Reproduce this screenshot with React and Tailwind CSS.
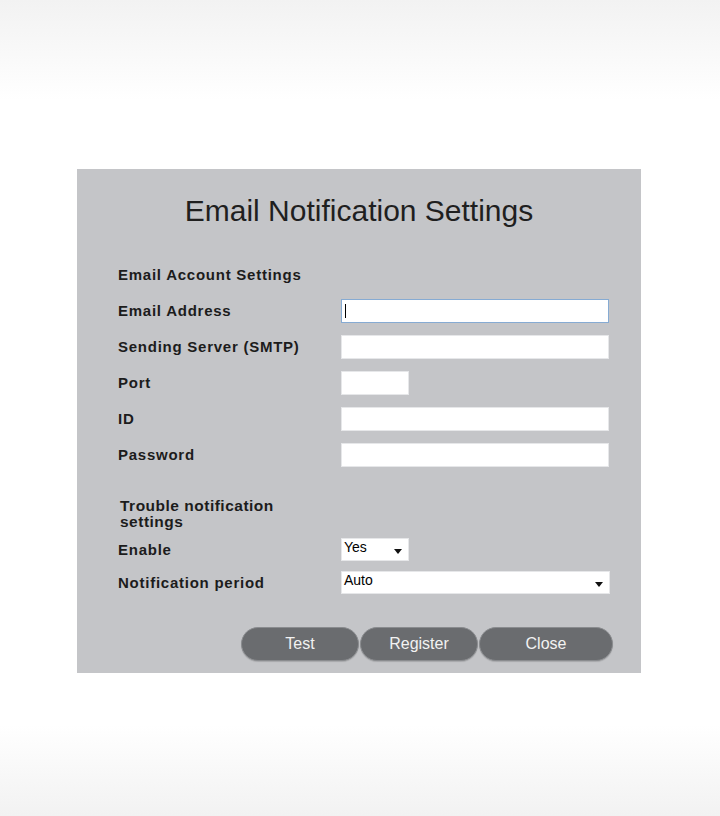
import React from "react";

const font = { fontFamily: '"Liberation Sans", Arial, sans-serif' };

function Label({ children }) {
  return (
    <div className="w-[223px] shrink-0 text-[15px] font-bold leading-6 tracking-[0.75px] text-[#1c1c1c]">
      {children}
    </div>
  );
}

function Input({ w = "w-[268px]", focused = false }) {
  return (
    <div
      className={`${w} h-6 bg-white border ${
        focused ? "border-[#86abd3]" : "border-[#e6e7e9]"
      } relative`}
    >
      {focused && <div className="absolute left-[3px] top-[4px] w-px h-[14px] bg-black" />}
    </div>
  );
}

function Arrow() {
  return (
    <svg width="8" height="5" viewBox="0 0 8 5" className="shrink-0">
      <path d="M0 0 L8 0 L4 5 Z" fill="#111" />
    </svg>
  );
}

function Select({ w, value }) {
  return (
    <div className={`${w} h-[23px] bg-white border border-[#e6e7e9] flex items-start justify-between pl-[2px] pr-[6px]`}>
      <span className="text-[14px] leading-[17px] text-black">{value}</span>
      <span className="pt-[10px]">
        <Arrow />
      </span>
    </div>
  );
}

function Button({ w, children }) {
  return (
    <button className={`${w} h-[34px] rounded-full bg-[#6a6c6f] border border-[#8a8c8f] shadow-[0_1px_1px_rgba(0,0,0,0.15)] text-[16px] text-[#f2f2f2] leading-none`}>
      {children}
    </button>
  );
}

export default function App() {
  return (
    <div
      style={font}
      className="w-[720px] h-[816px] pt-[169px] bg-[linear-gradient(to_bottom,#f2f2f2_0px,#ffffff_100px,#ffffff_725px,#f2f2f2_816px)]"
    >
      <div className="ml-[77px] w-[564px] h-[504px] bg-[#c4c5c8] pt-[26px]">
        <h1 className="text-center text-[30px] leading-8 font-normal text-[#1f1f1f]">
          Email Notification Settings
        </h1>

        <div className="pl-[41px] mt-[36px] flex flex-col gap-3">
          <div className="flex items-center h-6">
            <Label>Email Account Settings</Label>
          </div>
          <div className="flex items-center h-6">
            <Label>Email Address</Label>
            <Input focused />
          </div>
          <div className="flex items-center h-6">
            <Label>Sending Server (SMTP)</Label>
            <Input />
          </div>
          <div className="flex items-center h-6">
            <Label>Port</Label>
            <Input w="w-[68px]" />
          </div>
          <div className="flex items-center h-6">
            <Label>ID</Label>
            <Input />
          </div>
          <div className="flex items-center h-6">
            <Label>Password</Label>
            <Input />
          </div>
        </div>

        <div className="pl-[43px] mt-[31px] text-[15.5px] font-bold leading-4 tracking-[0.5px] text-[#1c1c1c]">
          Trouble notification
          <br />
          settings
        </div>

        <div className="pl-[41px] mt-[8px] flex flex-col gap-[10px]">
          <div className="flex items-center h-[23px]">
            <Label>Enable</Label>
            <Select w="w-[68px]" value="Yes" />
          </div>
          <div className="flex items-center h-[23px]">
            <Label>Notification period</Label>
            <Select w="w-[269px]" value="Auto" />
          </div>
        </div>

        <div className="mt-[33px] pl-[164px] flex gap-px">
          <Button w="w-[118px]">Test</Button>
          <Button w="w-[118px]">Register</Button>
          <Button w="w-[134px]">Close</Button>
        </div>
      </div>
    </div>
  );
}
